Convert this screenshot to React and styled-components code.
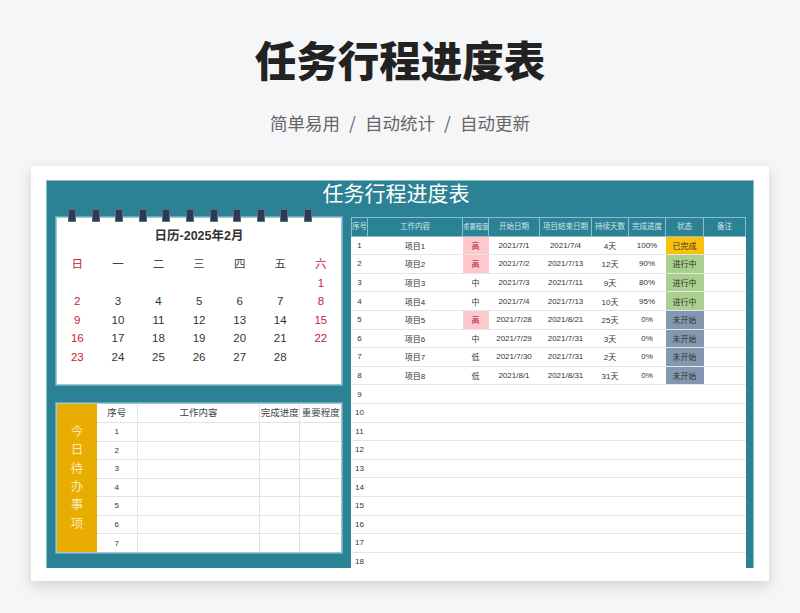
import React from 'react'
import styled, { createGlobalStyle } from 'styled-components'

const CJK = `"Liberation Sans", "Noto Sans CJK SC", sans-serif`

const Global = createGlobalStyle`
    html, body { margin: 0; padding: 0; background: #f5f6f8; }
    * { box-sizing: border-box; }
    body { font-family: ${CJK}; width: 800px; height: 613px; overflow: hidden; }
`

const weekDays = ['日', '一', '二', '三', '四', '五', '六']
const calendarWeeks = [
    ['', '', '', '', '', '', '1'],
    ['2', '3', '4', '5', '6', '7', '8'],
    ['9', '10', '11', '12', '13', '14', '15'],
    ['16', '17', '18', '19', '20', '21', '22'],
    ['23', '24', '25', '26', '27', '28', ''],
]

const headers = ['序号', '工作内容', '重要程度', '开始日期', '项目结束日期', '持续天数', '完成进度', '状态', '备注']
const colWidths = [16, 95, 26, 51, 52, 37, 37, 38, 42]
const projects = [
    ['项目1', '高', '2021/7/1', '2021/7/4', '4天', '100%', '已完成'],
    ['项目2', '高', '2021/7/2', '2021/7/13', '12天', '90%', '进行中'],
    ['项目3', '中', '2021/7/3', '2021/7/11', '9天', '80%', '进行中'],
    ['项目4', '中', '2021/7/4', '2021/7/13', '10天', '95%', '进行中'],
    ['项目5', '高', '2021/7/28', '2021/8/21', '25天', '0%', '未开始'],
    ['项目6', '中', '2021/7/29', '2021/7/31', '3天', '0%', '未开始'],
    ['项目7', '低', '2021/7/30', '2021/7/31', '2天', '0%', '未开始'],
    ['项目8', '低', '2021/8/1', '2021/8/31', '31天', '0%', '未开始'],
]
const emptyRows = [9, 10, 11, 12, 13, 14, 15, 16, 17, 18]
const statusColors = { 已完成: '#fdc00a', 进行中: '#a9d08e', 未开始: '#8497b0' }

const Page = () => (
    <Wrap>
        <Global />
        <Hero>
            <Title>任务行程进度表</Title>
            <Sub>
                <span>简单易用</span><Slash>/</Slash><span>自动统计</span><Slash>/</Slash><span>自动更新</span>
            </Sub>
        </Hero>
        <Card>
            <Sheet>
                <SheetTitle>任务行程进度表</SheetTitle>
                <Body>
                    <LeftCol>
                        <Calendar>
                            <Rings>
                                {Array.from({ length: 11 }, (_, i) => <Ring key={i} />)}
                            </Rings>
                            <CalTitle>日历-2025年2月</CalTitle>
                            <CalGrid>
                                {weekDays.map((d, i) => (
                                    <CalHead key={d} $red={i === 0 || i === 6}>{d}</CalHead>
                                ))}
                                {calendarWeeks.flat().map((d, i) => (
                                    <CalDay key={i} $red={i % 7 === 0 || i % 7 === 6}>{d}</CalDay>
                                ))}
                            </CalGrid>
                        </Calendar>
                        <Todo>
                            <TodoLabel>
                                {'今日待办事项'.split('').map((c) => <span key={c}>{c}</span>)}
                            </TodoLabel>
                            <TodoTable>
                                <colgroup>
                                    <col width="40" /><col width="122" /><col width="40" /><col width="41" />
                                </colgroup>
                                <thead>
                                    <tr>
                                        <TodoTh>序号</TodoTh>
                                        <TodoTh>工作内容</TodoTh>
                                        <TodoTh>完成进度</TodoTh>
                                        <TodoTh>重要程度</TodoTh>
                                    </tr>
                                </thead>
                                <tbody>
                                    {[1, 2, 3, 4, 5, 6, 7].map((n) => (
                                        <tr key={n}>
                                            <TodoTd>{n}</TodoTd><TodoTd /><TodoTd /><TodoTd />
                                        </tr>
                                    ))}
                                </tbody>
                            </TodoTable>
                        </Todo>
                    </LeftCol>
                    <TaskTable>
                        <colgroup>
                            {colWidths.map((w, i) => <col key={i} width={w} />)}
                        </colgroup>
                        <thead>
                            <tr>
                                {headers.map((h) => <Th key={h} $tight={h === '重要程度'}>{h}</Th>)}
                            </tr>
                        </thead>
                        <tbody>
                            {projects.map((p, i) => (
                                <tr key={p[0]}>
                                    <Td>{i + 1}</Td>
                                    <Td>{p[0]}</Td>
                                    <Td $bg={p[1] === '高' ? '#ffc7ce' : undefined} $color={p[1] === '高' ? '#b3202c' : undefined}>{p[1]}</Td>
                                    <Td>{p[2]}</Td>
                                    <Td>{p[3]}</Td>
                                    <Td>{p[4]}</Td>
                                    <Td>{p[5]}</Td>
                                    <Td $bg={statusColors[p[6]]}>{p[6]}</Td>
                                    <Td />
                                </tr>
                            ))}
                            {emptyRows.map((n) => (
                                <tr key={n}>
                                    <Td>{n}</Td>
                                    <Td /><Td /><Td /><Td /><Td /><Td /><Td /><Td />
                                </tr>
                            ))}
                        </tbody>
                    </TaskTable>
                </Body>
            </Sheet>
        </Card>
    </Wrap>
)

export default Page

const Wrap = styled.div`
    width: 800px;
    height: 613px;
    padding: 0 31px;
    display: flex;
    flex-direction: column;
    overflow: hidden;
    background: #f5f6f8;
`

const Hero = styled.header`
    height: 166px;
    display: flex;
    flex-direction: column;
    align-items: center;
`

const Title = styled.h1`
    margin: 29px 0 0;
    height: 60px;
    font-size: 41.5px;
    line-height: 60px;
    font-weight: 900;
    color: #222;
    font-family: "Noto Sans CJK SC", sans-serif;
`

const Sub = styled.div`
    margin-top: 20px;
    display: flex;
    align-items: center;
    font-size: 17.5px;
    line-height: 28px;
    color: #666;
    font-family: "Noto Sans CJK SC", sans-serif;
`

const Slash = styled.i`
    font-style: normal;
    width: 25px;
    text-align: center;
`

const Card = styled.section`
    width: 738px;
    height: 415px;
    padding: 14px 15px 0;
    background: #fff;
    box-shadow: 0 6px 14px rgba(60, 70, 80, 0.16), 0 0 8px rgba(60, 70, 80, 0.06);
`

const Sheet = styled.div`
    height: 388px;
    background: #2b8294;
    border: 1px solid #8cc0c9;
    border-bottom: 0;
    display: flex;
    flex-direction: column;
`

const SheetTitle = styled.div`
    flex: none;
    height: 27px;
    padding-right: 8px;
    text-align: center;
    color: #fff;
    font-size: 21px;
    line-height: 23px;
    font-family: "Noto Sans CJK SC", sans-serif;
`

const Body = styled.div`
    flex: none;
    height: 360px;
    overflow: hidden;
    display: flex;
    align-items: flex-start;
    gap: 9px;
    padding: 9px 9px 0;
`

const LeftCol = styled.div`
    width: 286px;
    display: flex;
    flex-direction: column;
    gap: 18px;
    flex: none;
`

const Calendar = styled.div`
    position: relative;
    height: 168px;
    background: #fff;
    border: 1px solid #9cc8cf;
    box-shadow: 0 0 0 1px rgba(156, 200, 207, 0.55);
`

const Rings = styled.div`
    position: absolute;
    top: -9px;
    left: 11px;
    display: flex;
    gap: 15.6px;
`

const Ring = styled.div`
    width: 8px;
    height: 13px;
    background: #2e3a52;
    border: 1px solid #58708a;
`

const CalTitle = styled.div`
    height: 36px;
    padding-top: 9px;
    text-align: center;
    font-size: 12.5px;
    line-height: 18px;
    font-weight: 700;
    color: #333;
`

const CalGrid = styled.div`
    display: grid;
    grid-template-columns: repeat(7, 40.6px);
    grid-auto-rows: 18.6px;
    margin-top: 1px;
`

const CalHead = styled.div`
    text-align: center;
    font-size: 11.5px;
    line-height: 18.6px;
    color: ${(p) => (p.$red ? '#c8232c' : '#444')};
`

const CalDay = styled(CalHead)`
    color: ${(p) => (p.$red ? '#c8232c' : '#333')};
`

const Todo = styled.div`
    height: 150px;
    display: flex;
    border: 1px solid #9cc8cf;
    box-shadow: 0 0 0 1px rgba(156, 200, 207, 0.55);
    background: #fff;
`

const TodoLabel = styled.div`
    width: 40px;
    flex: none;
    background: #e8ad00;
    color: #fbeab8;
    font-size: 12.5px;
    display: flex;
    flex-direction: column;
    align-items: center;
    justify-content: center;
    span { height: 18.4px; line-height: 18.4px; }
`

const TodoTable = styled.table`
    flex: 1;
    width: 243px;
    table-layout: fixed;
    border-collapse: collapse;
`

const TodoTh = styled.th`
    height: 18.5px;
    padding: 0;
    font-weight: 400;
    font-size: 9.5px;
    line-height: 14px;
    color: #444;
    white-space: nowrap;
    border-right: 1px solid #e2e4e6;
    border-bottom: 1px solid #e2e4e6;
    &:last-child { border-right: 0; }
`

const TodoTd = styled.td`
    height: 18.5px;
    padding: 0;
    text-align: center;
    font-size: 8px;
    color: #333;
    border-right: 1px solid #e2e4e6;
    border-bottom: 1px solid #e2e4e6;
    &:last-child { border-right: 0; }
    tr:last-child & { border-bottom: 0; }
`

const TaskTable = styled.table`
    width: 394px;
    flex: none;
    table-layout: fixed;
    border-collapse: collapse;
    background: #fff;
`

const Th = styled.th`
    height: 18.6px;
    padding: 0;
    font-weight: 400;
    font-size: ${(p) => (p.$tight ? '6.4px' : '7.5px')};
    line-height: 12px;
    color: #cfe6ea;
    background: #2b8294;
    white-space: nowrap;
    border: 1px solid #8cc0c9;
`

const Td = styled.td`
    height: 18.6px;
    padding: 0;
    text-align: center;
    font-size: 8px;
    color: ${(p) => p.$color || '#333'};
    background: ${(p) => p.$bg || '#fff'};
    white-space: nowrap;
    border-bottom: 1px solid #e4e6e8;
`
